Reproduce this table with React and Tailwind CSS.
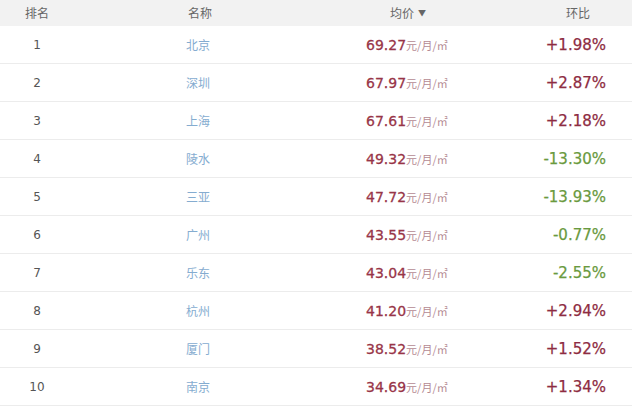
import React from 'react';

const rows = [
  { rank: 1, city: '北京', price: '69.27', change: '+1.98%' },
  { rank: 2, city: '深圳', price: '67.97', change: '+2.87%' },
  { rank: 3, city: '上海', price: '67.61', change: '+2.18%' },
  { rank: 4, city: '陵水', price: '49.32', change: '-13.30%' },
  { rank: 5, city: '三亚', price: '47.72', change: '-13.93%' },
  { rank: 6, city: '广州', price: '43.55', change: '-0.77%' },
  { rank: 7, city: '乐东', price: '43.04', change: '-2.55%' },
  { rank: 8, city: '杭州', price: '41.20', change: '+2.94%' },
  { rank: 9, city: '厦门', price: '38.52', change: '+1.52%' },
  { rank: 10, city: '南京', price: '34.69', change: '+1.34%' },
];

const cjk = "font-['Noto_Sans_CJK_SC',sans-serif]";
const num = "font-['DejaVu_Sans','Noto_Sans_CJK_SC',sans-serif]";

const App = () => {
  return (
    <div className="w-[640px] h-[411px] bg-white overflow-hidden">
      <div className="w-[632px]">
        {/* Header */}
        <div className={`grid grid-cols-[74px_252px_152px_1fr] h-[26px] items-center bg-[#f2f2f2] text-[12px] text-[#666] ${cjk}`}>
          <div className="text-center">排名</div>
          <div className="text-center">名称</div>
          <div className="flex items-center justify-center gap-1 pl-[12px]">
            均价
            <span className="text-[8px] text-[#666]">▼</span>
          </div>
          <div className="text-right pr-[42px]">环比</div>
        </div>

        {rows.map((r) => {
          const up = r.change.startsWith('+');
          return (
            <div
              key={r.rank}
              className="grid grid-cols-[74px_252px_152px_1fr] h-[38px] items-center border-b border-[#ececec]"
            >
              <div className={`text-center text-[12px] text-[#555] pt-[1px] ${num}`}>{r.rank}</div>
              <div className={`text-center text-[12px] text-[#85acd0] pr-[4px] pt-[1px] ${cjk}`}>{r.city}</div>
              <div className="pl-[40px] flex items-baseline pt-[1px]">
                <span className={`text-[14px] text-[#983548] [-webkit-text-stroke:0.3px_#983548] ${num}`}>{r.price}</span>
                <span className={`text-[11px] text-[#b58a93] ${cjk}`}>元/月/㎡</span>
              </div>
              <div
                className={`text-right pr-[26px] pt-[1px] text-[15px] ${num} ${
                  up
                    ? 'text-[#8e2c42] [-webkit-text-stroke:0.25px_#8e2c42]'
                    : 'text-[#6a9a3e] [-webkit-text-stroke:0.25px_#6a9a3e]'
                }`}
              >
                {r.change}
              </div>
            </div>
          );
        })}
      </div>
    </div>
  );
};

export default App;
